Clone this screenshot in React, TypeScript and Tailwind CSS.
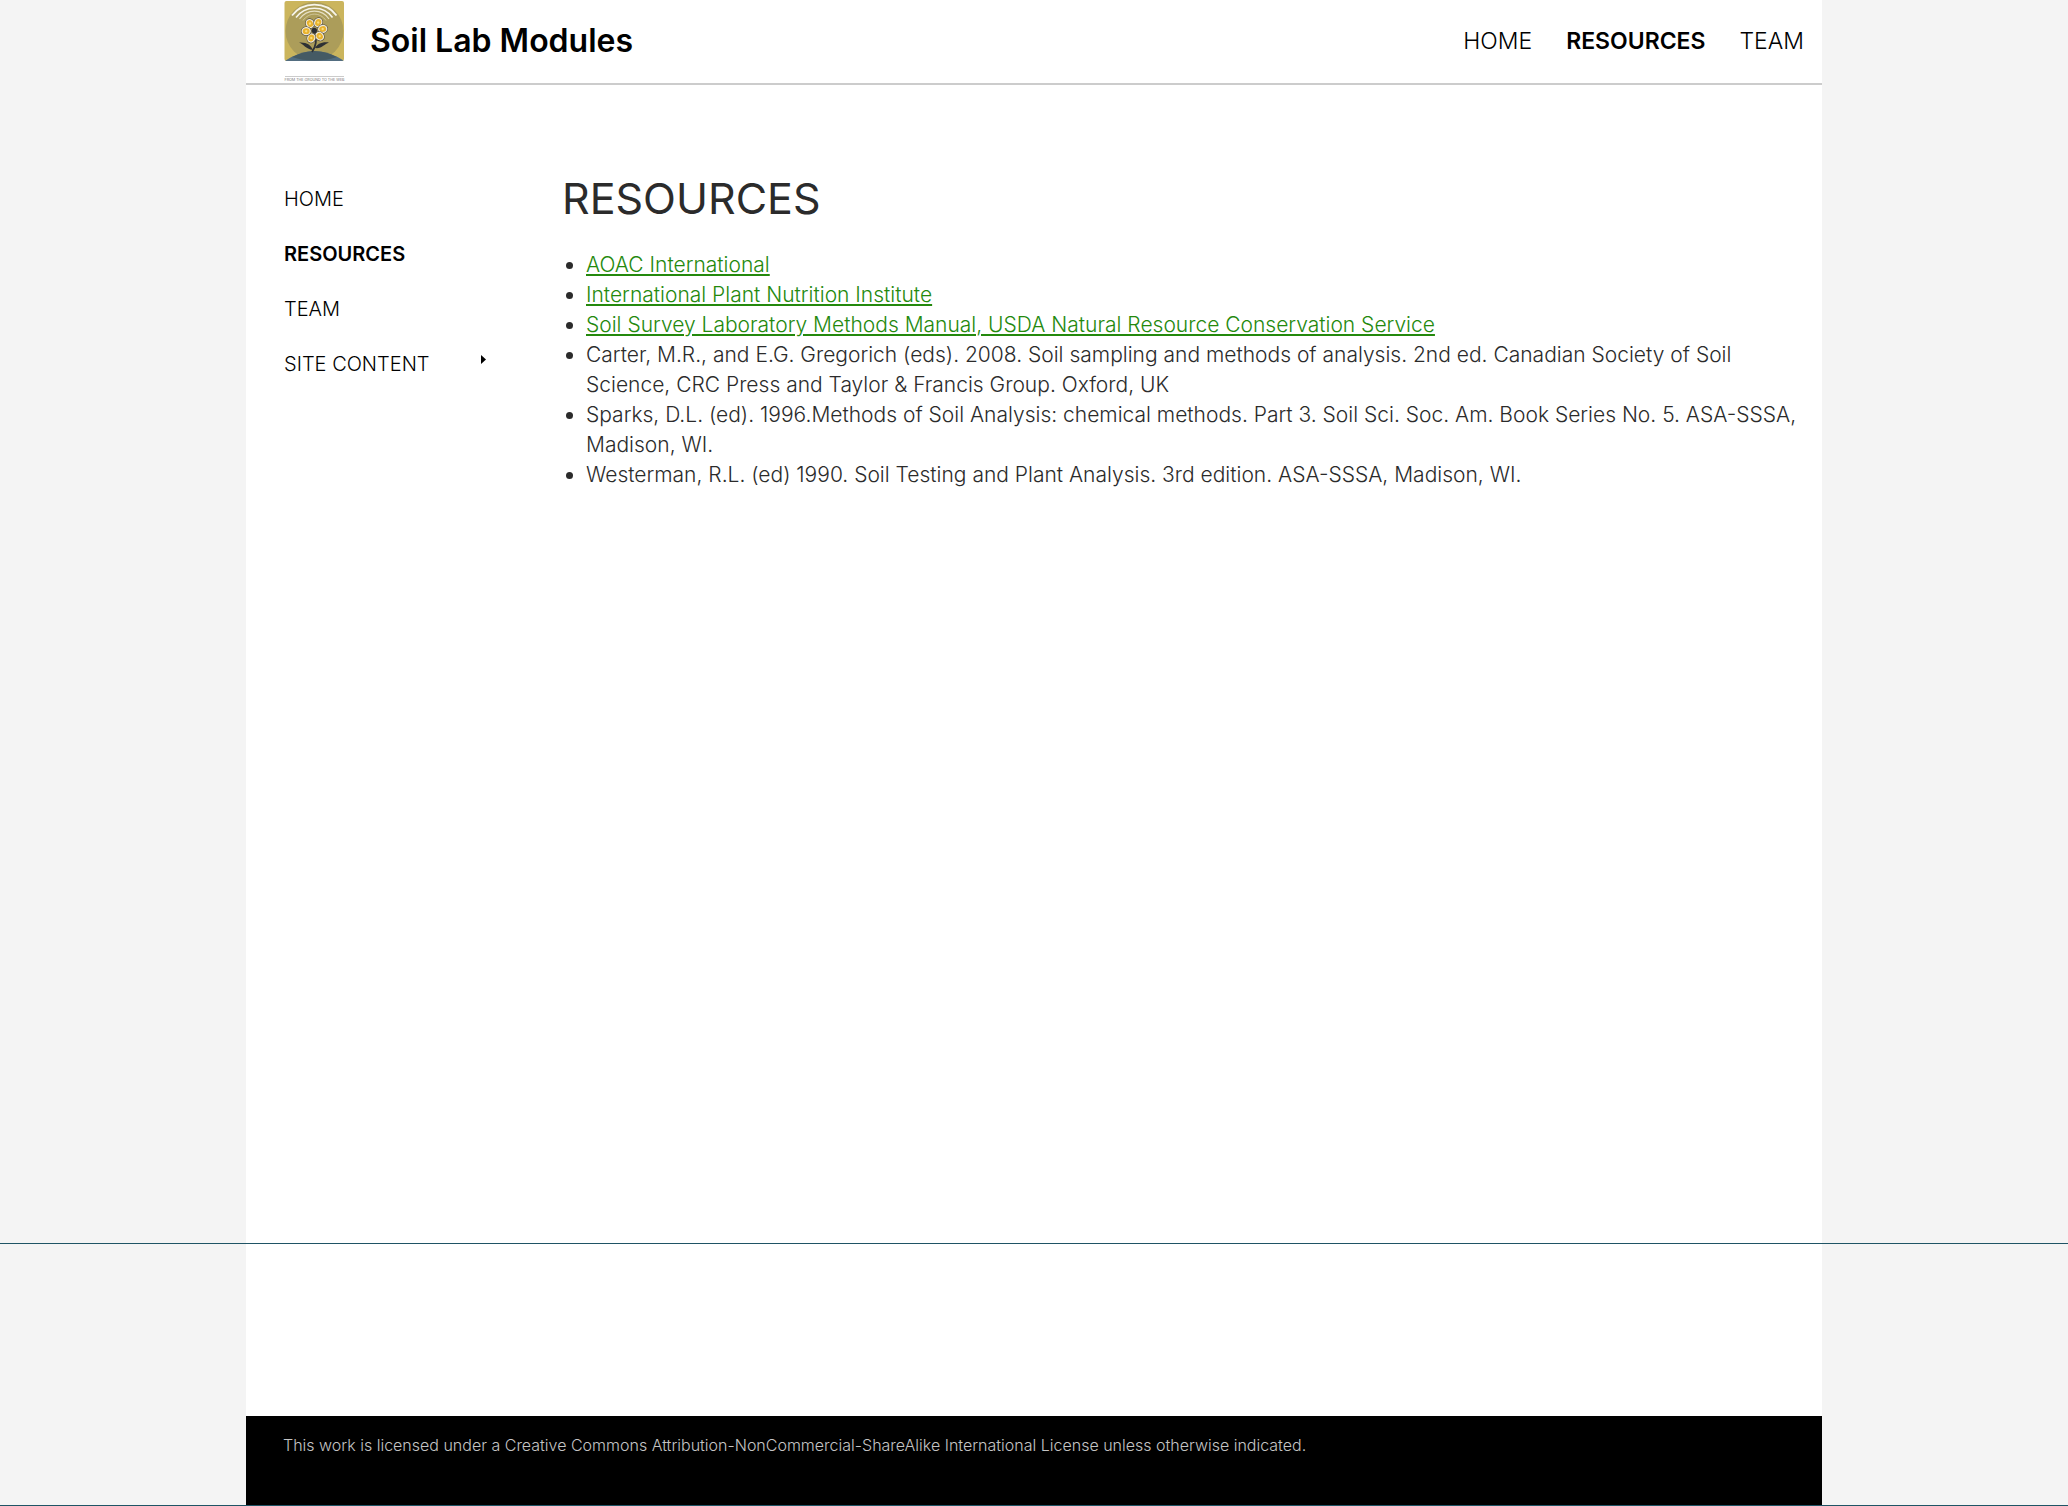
type Item = { label: string; active?: boolean; expandable?: boolean };

const topLinks: Item[] = [{ label: "HOME" }, { label: "RESOURCES", active: true }, { label: "TEAM" }];

const sideLinks: Item[] = [...topLinks, { label: "SITE CONTENT", expandable: true }];

const resources: { text: string; link?: boolean }[] = [
  { text: "AOAC International", link: true },
  { text: "International Plant Nutrition Institute", link: true },
  { text: "Soil Survey Laboratory Methods Manual, USDA Natural Resource Conservation Service", link: true },
  {
    text: "Carter, M.R., and E.G. Gregorich (eds). 2008. Soil sampling and methods of analysis. 2nd ed. Canadian Society of Soil Science, CRC Press and Taylor & Francis Group. Oxford, UK",
  },
  {
    text: "Sparks, D.L. (ed). 1996.Methods of Soil Analysis: chemical methods. Part 3. Soil Sci. Soc. Am. Book Series No. 5. ASA-SSSA, Madison, WI.",
  },
  { text: "Westerman, R.L. (ed) 1990. Soil Testing and Plant Analysis. 3rd edition. ASA-SSSA, Madison, WI." },
];

const petals = [
  [26, 23.5],
  [34.2, 22.5],
  [38.7, 29],
  [35.7, 36.2],
  [27.3, 38],
  [22.2, 31.2],
];

function Logo() {
  return (
    <svg width="62" height="83" viewBox="0 0 62 83" role="img" aria-label="From the ground to the web">
      <defs>
        <clipPath id="tile">
          <rect x="0.500" y="1" width="59.500" height="60" rx="2" />
        </clipPath>
      </defs>
      <g clipPath="url(#tile)">
        <rect x="0" y="1" width="60" height="60" fill="#cbb55d" />
        <circle cx="30.5" cy="31" r="29" fill="#ac9d5a" />
        <path d="M0 61.500Q30.500 41 61 61.500Z" fill="#526d80" />
        <path d="M8 57Q30.500 45 53 57Q43 60.500 30.500 60.500Q18 60.500 8 57Z" fill="#455a64" />
      </g>
      <g fill="none" stroke="#f7f5ea">
        <path d="M8 15.500C19 1 42 1 52.500 15.500" strokeWidth="1.800" />
        <path d="M12 17.500C21 5 40 5 48.500 17.500" strokeWidth="1.500" />
        <path d="M15.500 19C23 8.500 38 8.500 45 19" strokeWidth="1.100" stroke="#e6e0c4" />
        <path d="M19 20.500C25 12 36 12 42 20.500" strokeWidth="0.800" stroke="#d8d0a8" />
      </g>
      <path d="M31 32Q34 44 28 52" fill="none" stroke="#2e3134" strokeWidth="1.800" />
      <path d="M29 50C27 45 23 42 15 42.500C20 44 21 49 29 50Z" fill="#2e3134" />
      <path d="M31 48C33 44 38 41.500 45 42.500C40 44 38 49 31 48Z" fill="#2e3134" />
      {petals.map(([x, y]) => (
        <g key={`${x}-${y}`} transform={`rotate(${(Math.atan2(y - 30.5, x - 30.3) * 180) / Math.PI} ${x} ${y})`}>
          <ellipse cx={x} cy={y} rx="5.300" ry="4.700" fill="#57513f" />
          <ellipse cx={x} cy={y} rx="4.700" ry="4.100" fill="#efe9d8" />
          <ellipse cx={x} cy={y} rx="3.500" ry="2.900" fill="#e9b22c" />
          <circle cx={x} cy={y} r="1.200" fill="#f8dc7c" />
        </g>
      ))}
      <circle cx="30.3" cy="30.500" r="2.700" fill="#2b2d33" />
      <path d="M1 76.500H60" stroke="#b5b5b5" strokeWidth="0.700" />
      <text x="30.500" y="81" textAnchor="middle" fontSize="3.700" fill="#777777">
        FROM THE GROUND TO THE WEB
      </text>
    </svg>
  );
}

export default function App() {
  return (
    <div className="flex min-h-screen flex-col bg-[#f4f4f4] font-['Inter',sans-serif] text-[#2b2b2b]">
      <div className="flex flex-1 flex-col border-b border-[#1f5465]">
        <div className="mx-auto w-full max-w-[1576px] flex-1 bg-white">
          <header className="flex items-center justify-between border-b-2 border-[#cccccc] pr-[18px] pl-[38px] text-black">
            <div className="flex items-center gap-6">
              <Logo />
              <a href="#" className="pb-[2px] text-[32px] leading-10 font-semibold">
                Soil Lab Modules
              </a>
            </div>
            <nav aria-label="Main" className="flex gap-[34px] pb-[2px] text-[23px] leading-8">
              {topLinks.map((item) => (
                <a key={item.label} href="#" className={item.active ? "font-semibold" : "font-light"}>
                  {item.label}
                </a>
              ))}
            </nav>
          </header>

          <div className="flex pt-[87px] pr-5 pl-[38px]">
            <nav aria-label="Site" className="w-[278px] shrink-0 text-[20px] leading-[55px] text-black">
              {sideLinks.map((item) => (
                <div key={item.label} className="flex w-[202px] justify-between">
                  <a href="#" className={item.active ? "font-semibold" : "font-light"}>
                    {item.label}
                  </a>
                  {item.expandable && (
                    <button type="button" aria-label="Expand site content" className="pb-[10px]">
                      <svg width="5" height="9" viewBox="0 0 5 9">
                        <path d="M0 0L5 4.500L0 9Z" fill="#000000" />
                      </svg>
                    </button>
                  )}
                </div>
              ))}
            </nav>

            <main className="min-w-0 flex-1">
              <h1 className="mb-[26px] text-[43px] leading-[52px]">RESOURCES</h1>
              <ul className="list-disc pl-6 text-[21px] leading-[30px] font-light">
                {resources.map((item) => (
                  <li key={item.text}>
                    {item.link ? (
                      <a href="#" className="text-[#24890d] underline decoration-2 underline-offset-2">
                        {item.text}
                      </a>
                    ) : (
                      item.text
                    )}
                  </li>
                ))}
              </ul>
            </main>
          </div>
        </div>
      </div>

      <div className="border-b border-[#1f5465]">
        <div className="mx-auto w-full max-w-[1576px] bg-white pt-[172px]">
          <footer className="bg-black px-[37px] pt-[17px] pb-12 text-[16px] leading-6 font-light text-[#c4c4c4]">
            This work is licensed under a Creative Commons Attribution-NonCommercial-ShareAlike International License
            unless otherwise indicated.
          </footer>
        </div>
      </div>
    </div>
  );
}
